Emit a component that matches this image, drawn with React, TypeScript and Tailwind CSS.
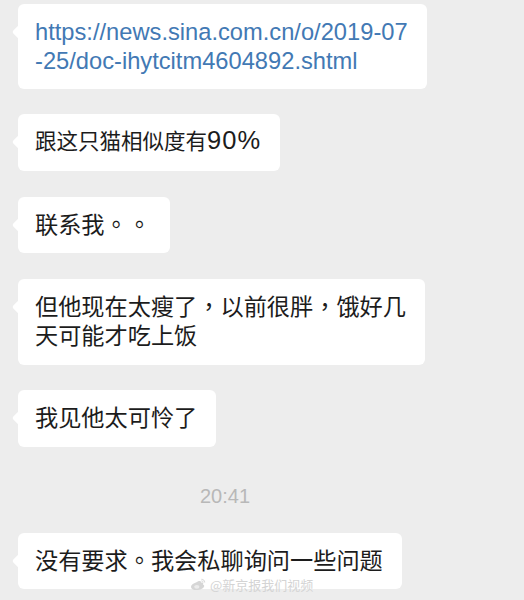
import React from 'react';

type BubbleProps = {
  className?: string;
  children: React.ReactNode;
};

const Bubble: React.FC<BubbleProps> = ({ className = '', children }) => (
  <div className={`relative bg-white rounded-[6px] pl-[17px] pr-[19px] py-[14px] leading-[28.5px] ${className}`}>
    <span className="absolute left-[-4px] top-[23px] w-[10px] h-[10px] bg-white rotate-45 rounded-[2px]" />
    <div className="relative">{children}</div>
  </div>
);

// centred full-width punctuation, as on the phone
const P: React.FC<{ c: string }> = ({ c }) => (
  <span className="leading-none font-['Noto_Sans_CJK_TC',sans-serif]">{c}</span>
);

export default function App() {
  return (
    <div className="relative w-[524px] h-[600px] overflow-hidden bg-[#ededed] text-[#1c1c1c] font-['Liberation_Sans','Noto_Sans_CJK_SC',sans-serif]">
      <div className="flex flex-col items-start pl-[18px] pt-[4px]">
        <Bubble className="h-[85px] text-[23.7px] text-[#4279b4]">
          <div>https://news.sina.com.cn/o/2019-07</div>
          <div>-25/doc-ihytcitm4604892.shtml</div>
        </Bubble>

        <Bubble className="mt-[25px] h-[57px] text-[21.5px]">
          跟这只猫相似度有<span className="leading-none text-[25.5px] tracking-[1px]">90%</span>
        </Bubble>

        <Bubble className="mt-[26px] h-[56px] text-[23.2px]">
          联系我<P c="。" /><P c="。" />
        </Bubble>

        <Bubble className="mt-[26px] h-[86px] text-[23.2px]">
          <div>
            但他现在太瘦了<P c="，" />以前很胖<P c="，" />饿好几
          </div>
          <div>天可能才吃上饭</div>
        </Bubble>

        <Bubble className="mt-[25px] h-[57px] text-[23.2px]">我见他太可怜了</Bubble>

        <div className="mt-[34px] w-[414px] h-[30px] flex items-center justify-center text-[20px] text-[#b8b8b8]">
          20:41
        </div>

        <Bubble className="mt-[22px] h-[56px] text-[23.2px]">
          没有要求<P c="。" />我会私聊询问一些问题
        </Bubble>
      </div>

      {/* weibo watermark */}
      <div className="absolute left-[190px] top-[577px] flex items-center gap-[4px] text-[13px] leading-[16px] text-[#d4d4d4] font-['Noto_Sans_CJK_SC',sans-serif]">
        <svg width="16" height="14" viewBox="0 0 16 14" fill="none">
          <path d="M6.5 4.2c2.8-2 5.2-1.4 4.6.6 1.6-.6 2.7.2 1.9 1.6 1.2.4 1.4 1.3 1.1 2.1-.8 2.2-4 3.6-7.3 3.6C3.6 12.1 1 10.8 1 8.7c0-1.4 2.1-3.5 5.5-4.5z" fill="#d6d6d6" />
          <ellipse cx="6.8" cy="8.8" rx="2.6" ry="1.9" fill="#ececec" />
          <path d="M11.8 1.3c1.6 0 2.9 1.2 2.9 2.8M11.8 2.9c.7 0 1.3.5 1.3 1.2" stroke="#d6d6d6" strokeWidth="1" strokeLinecap="round" />
        </svg>
        <span>@新京报我们视频</span>
      </div>
    </div>
  );
}
